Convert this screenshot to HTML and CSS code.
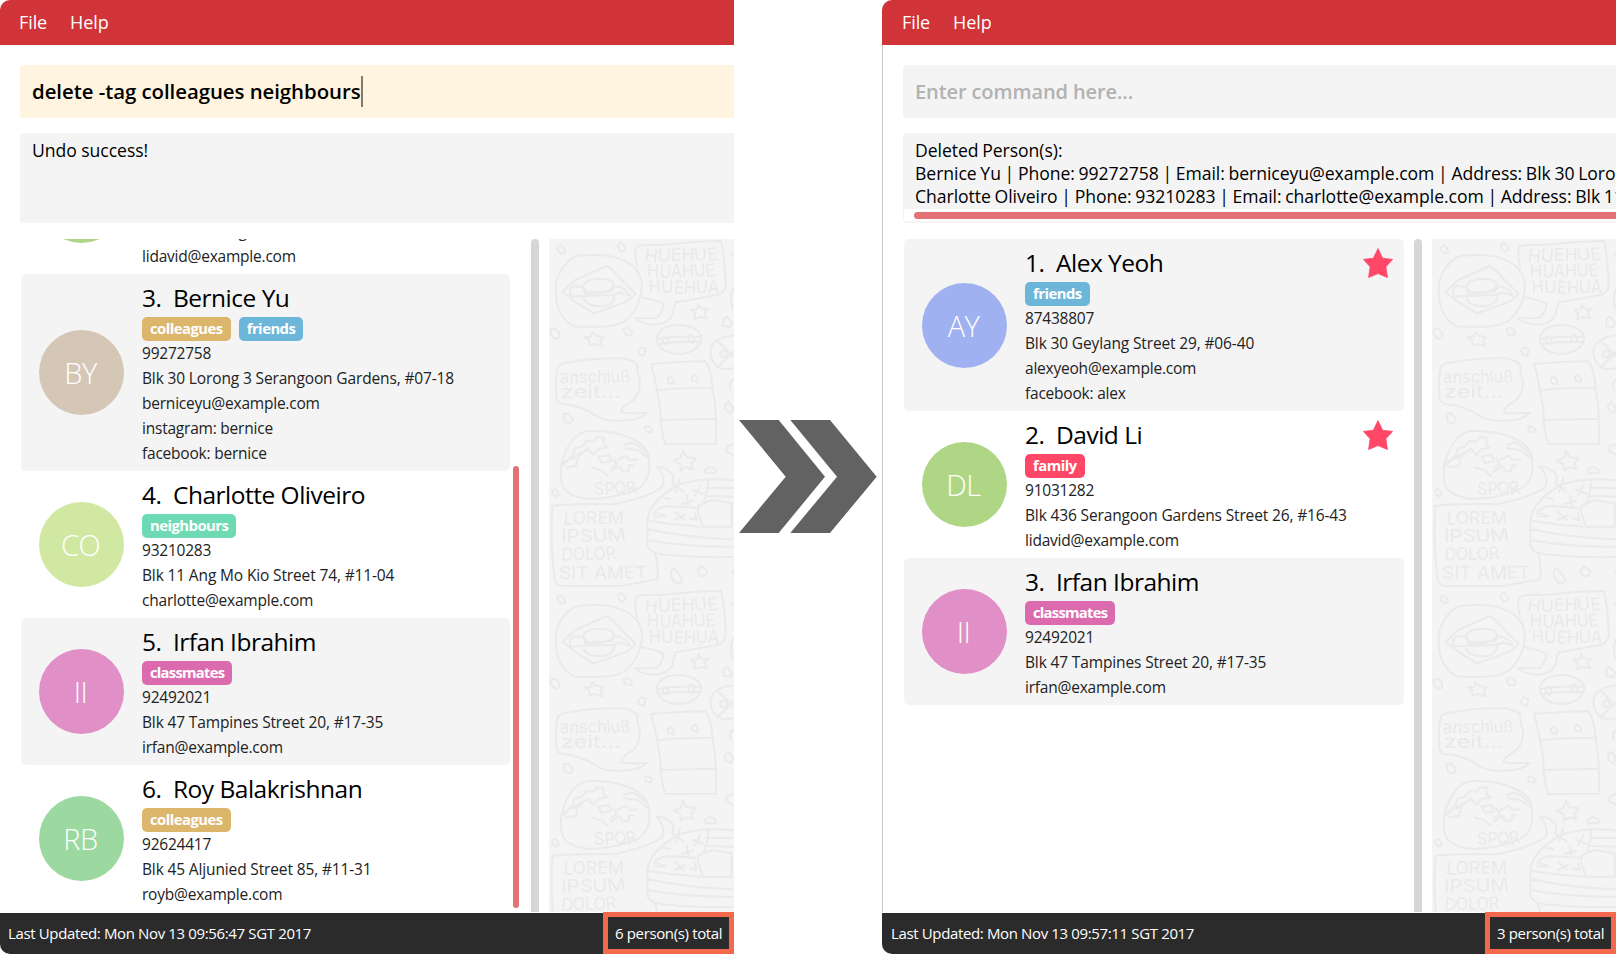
FILE: index.html
```html
<!DOCTYPE html>
<html lang="en"><head><meta charset="utf-8"><title>Contacts</title><link rel="stylesheet" href="styles.css"></head>
<body>
<svg class="defs" width="0" height="0" aria-hidden="true">
<defs>
<symbol id="star" viewBox="0 0 30 30"><path d="M15 .6 L19.6 10.2 L29.6 11.4 L22.9 18.8 L24.4 29.5 L15 25.6 L5.6 29.5 L7.1 18.8 L.4 11.4 L10.4 10.2Z" fill="#ff4767" stroke="#ff4767" stroke-width=".8" stroke-linejoin="round"/></symbol>
<pattern id="doodle" width="350" height="350" patternUnits="userSpaceOnUse">
<rect width="350" height="350" fill="#f4f4f4"/>
<g transform="scale(.33333) translate(-27 -27)" fill="none" stroke="#eaeaea" stroke-width="6" stroke-linejoin="round" stroke-linecap="round">
<path d="M100 82Q130 73 190 76Q240 80 276 106Q304 130 306 165Q305 225 260 270Q235 288 190 290H105Q70 275 55 235Q42 195 50 150Q65 105 100 82Z"/>
<path d="M68 185L105 150L200 108L215 118L245 150L287 192L260 215L162 251L100 212ZM130 170Q132 150 170 147Q215 145 220 160Q225 178 190 187Q140 200 130 170ZM92 200Q85 170 105 168L130 172L136 193L155 187L216 183L225 168Q258 172 270 197L240 188L216 195L105 199ZM130 205Q140 232 195 228Q222 220 223 198"/>
<path d="M292 112Q280 70 290 50Q310 42 360 45L470 35L543 33Q555 80 557 165Q555 190 530 195L470 206L408 217Q400 230 398 255Q380 285 340 284Q300 280 285 265L350 264Q372 240 370 220Q340 208 305 202"/>
<path d="M53 50L62 46L72 55L76 68L63 70L53 60ZM234 45L242 37L253 48L256 58L245 66L235 56ZM32 300L45 296L58 310L57 323L44 326L32 312ZM250 298L262 293L277 305L274 315L256 314ZM294 362L303 352L317 357L313 378L297 373Z"/>
<path d="M157 306L168 317L191 322L181 331L188 349L165 342L149 347L147 330L134 322L153 320ZM475 222L484 236L505 236L493 248L501 265L482 261L462 268L466 250L452 240L472 238Z"/>
<path d="M350 325Q357 285 420 285Q478 290 484 323Q480 365 420 372Q355 370 350 325ZM354 327Q400 318 481 320M358 342Q410 334 480 336M368 325L375 320L386 330L381 344L370 340ZM444 320L453 313L463 325L459 338L446 335Z"/>
<path d="M580 316Q520 322 511 360Q510 405 550 418L580 415M536 335L583 382M533 412L580 365M541 368L555 358L563 375L550 382L540 377ZM582 70L574 75M582 172Q568 190 576 235M550 268L560 260L577 278L570 291L550 288ZM582 450Q563 455 573 480M555 525L565 515L580 535L572 550L557 540ZM582 642L562 648L557 663L582 676M582 1018L578 1030"/>
<path d="M53 415Q55 400 90 397Q160 383 245 385Q280 390 292 405Q290 430 300 450Q302 490 280 510Q240 535 242 545Q255 553 322 548Q300 572 245 572Q190 575 165 555Q120 525 65 522Q45 515 49 490Q45 450 53 415Z"/>
<path d="M333 402Q420 395 497 394Q515 420 518 480Q530 530 528 641L375 642Q360 590 361 540Q350 460 333 402ZM352 483Q390 472 518 474M365 570L525 566M383 446L393 440L404 453L399 462L385 458ZM456 440L464 433L475 447L472 456L456 451Z"/>
<path d="M70 553L84 550L99 567L92 580L75 577ZM315 592L324 588L337 598L333 607L319 605ZM495 720Q508 704 527 719L526 728L496 730ZM37 780L48 777L57 793L48 799L38 793ZM392 1024L402 1014L426 1045L425 1055L410 1062L395 1045ZM473 1020L485 1008L502 1025L496 1038L478 1037Z"/>
<path d="M429 662L439 681L467 685L453 702L461 718L437 712L423 722L421 702L400 691L421 685Z"/>
<path d="M65 700Q90 610 145 603Q220 600 270 624Q325 645 327 690Q335 745 300 772Q245 802 150 807Q75 800 65 760Q60 725 65 700Z"/>
<path d="M70 705L96 680L105 655L125 650L140 633L162 635L170 622L191 623L190 642L202 652L176 657L160 675L145 657L130 665L112 685L88 683M80 712L107 708L112 692M65 700L130 665M175 680L206 675L214 693L186 699ZM252 645L275 637L292 645L325 673M252 655L293 660L325 685M220 685L231 704L214 713M212 725L238 708L247 724L265 723L268 705L281 707M232 690L256 677L270 690L292 688M155 712L187 722L204 738"/>
<path d="M37 828Q100 820 220 823Q335 800 369 768Q375 735 350 710Q375 707 400 735L400 760M37 828Q30 960 45 1050Q50 1069 70 1068L240 1068L352 1048Q356 1000 344 968"/>
<path d="M582 752Q500 740 420 762Q330 810 322 870V940Q320 975 400 975Q450 983 582 981M505 752Q502 790 490 820L475 828L474 845L488 890L575 890V820L515 810L490 820M500 773L580 774M500 798L582 800M342 852Q345 835 380 828L468 833M325 872Q400 885 480 890M322 896Q430 922 582 928M323 930Q450 953 582 950M395 758L430 785M408 787L420 745M460 780L490 792M465 795L481 766M425 822L460 812M440 796L445 825M370 803L390 807M345 860L375 858L350 850M405 845L432 870M435 855L405 870M450 865L470 870L465 850"/>
</g>
<g class="doodle-text" fill="#e9e9e9">
<text x="95" y="22" textLength="75" lengthAdjust="spacingAndGlyphs" rotate="8 4 0 0 -8 -8">HUEHUE</text>
<text x="98" y="38" textLength="69" lengthAdjust="spacingAndGlyphs" rotate="0 4 0 0 -6 -8">HUAHUE</text>
<text x="100" y="54" textLength="70" lengthAdjust="spacingAndGlyphs" rotate="-4 0 6 4 0 0">HUEHUA</text>
<text x="11" y="144" textLength="71" lengthAdjust="spacingAndGlyphs" rotate="0 5 0 0 0 -5 -5 -5 0">anschluß</text>
<text x="12" y="159" textLength="60" lengthAdjust="spacingAndGlyphs">zeit...</text>
<text x="45" y="256" textLength="44" lengthAdjust="spacingAndGlyphs" rotate="0 0 -8 -14">SPQR</text>
<text x="14" y="285" textLength="61" lengthAdjust="spacingAndGlyphs" rotate="6 0 0 0 0">LOREM</text>
<text x="12" y="303" textLength="66" lengthAdjust="spacingAndGlyphs" rotate="0 0 0 -5 -8">IPSUM</text>
<text x="12" y="321" textLength="56" lengthAdjust="spacingAndGlyphs" rotate="6 0 0 -4 -8">DOLOR</text>
<text x="10" y="340" textLength="89" lengthAdjust="spacingAndGlyphs" rotate="0 0 0 0 0 0 -5 -5">SIT AMET</text>
</g>
</pattern>
</defs></svg>
<main class="stage">
<section class="window window-left">
<nav class="menu"><span>File</span><span>Help</span></nav>
<div class="command active"><span class="typed">delete -tag colleagues neighbours</span><span class="caret"></span></div>
<div class="result"><p>Undo success!</p></div>
<div class="content">
<div class="list scrolled">
<article class="card"><div class="avatar green">DL</div><div class="info"><h2><b>2.</b>David Li</h2><div class="tags"><span class="tag family">family</span></div><p>91031282</p><p class="address">Blk 436 Serangoon Gardens Street 26, #16-43</p><p>lidavid@example.com</p></div></article>
<article class="card shade"><div class="avatar tan">BY</div><div class="info"><h2><b>3.</b>Bernice Yu</h2><div class="tags"><span class="tag colleagues">colleagues</span><span class="tag friends">friends</span></div><p>99272758</p><p class="address">Blk 30 Lorong 3 Serangoon Gardens, #07-18</p><p>berniceyu@example.com</p><p>instagram: bernice</p><p>facebook: bernice</p></div></article>
<article class="card"><div class="avatar lime">CO</div><div class="info"><h2><b>4.</b>Charlotte Oliveiro</h2><div class="tags"><span class="tag neighbours">neighbours</span></div><p>93210283</p><p class="address">Blk 11 Ang Mo Kio Street 74, #11-04</p><p>charlotte@example.com</p></div></article>
<article class="card shade"><div class="avatar pink">II</div><div class="info"><h2><b>5.</b>Irfan Ibrahim</h2><div class="tags"><span class="tag classmates">classmates</span></div><p>92492021</p><p class="address">Blk 47 Tampines Street 20, #17-35</p><p>irfan@example.com</p></div></article>
<article class="card"><div class="avatar mint">RB</div><div class="info"><h2><b>6.</b>Roy Balakrishnan</h2><div class="tags"><span class="tag colleagues">colleagues</span></div><p>92624417</p><p class="address">Blk 45 Aljunied Street 85, #11-31</p><p>royb@example.com</p></div></article>
</div>
<div class="track"><div class="thumb"></div></div>
<div class="divider"></div>
<svg class="wall"><rect width="100%" height="100%" fill="url(#doodle)"/></svg>
</div>
<footer class="status"><span>Last Updated: Mon Nov 13 09:56:47 SGT 2017</span><span class="total">6 person(s) total</span></footer>
</section>
<div class="between"><svg width="138" height="114" viewBox="0 0 138 114" fill="#626262"><path d="M0 0H39.7L86 56.7L39.7 113H0L46.7 56.7ZM51.3 0H91L137.7 56.7L91 113H51.3L98 56.7Z"/></svg></div>
<section class="window window-right">
<nav class="menu"><span>File</span><span>Help</span></nav>
<div class="command"><span class="typed">Enter command here...</span></div>
<div class="result deleted"><p>Deleted Person(s):</p><p>Bernice Yu | Phone: 99272758 | Email: berniceyu@example.com | Address: Blk 30 Lorong 3 Serangoon Gardens, #07-18</p><p>Charlotte Oliveiro | Phone: 93210283 | Email: charlotte@example.com | Address: Blk 11 Ang Mo Kio Street 74, #11-04</p><div class="hscroll"><div class="hthumb"></div></div></div>
<div class="content">
<div class="list">
<article class="card shade"><div class="avatar blue">AY</div><div class="info"><h2><b>1.</b>Alex Yeoh</h2><div class="tags"><span class="tag friends">friends</span></div><p>87438807</p><p class="address">Blk 30 Geylang Street 29, #06-40</p><p>alexyeoh@example.com</p><p>facebook: alex</p></div><svg class="star"><use href="#star"/></svg></article>
<article class="card"><div class="avatar green">DL</div><div class="info"><h2><b>2.</b>David Li</h2><div class="tags"><span class="tag family">family</span></div><p>91031282</p><p class="address">Blk 436 Serangoon Gardens Street 26, #16-43</p><p>lidavid@example.com</p></div><svg class="star"><use href="#star"/></svg></article>
<article class="card shade"><div class="avatar pink">II</div><div class="info"><h2><b>3.</b>Irfan Ibrahim</h2><div class="tags"><span class="tag classmates">classmates</span></div><p>92492021</p><p class="address">Blk 47 Tampines Street 20, #17-35</p><p>irfan@example.com</p></div></article>
</div>
<div class="track"></div>
<div class="divider"></div>
<svg class="wall"><rect width="100%" height="100%" fill="url(#doodle)"/></svg>
</div>
<footer class="status"><span>Last Updated: Mon Nov 13 09:57:11 SGT 2017</span><span class="total">3 person(s) total</span></footer>
</section>
</main>
</body></html>
```
FILE: styles.css
```css
* { box-sizing: border-box; }
body { margin: 0; background: #fff; font-family: "Open Sans", "Noto Sans", sans-serif; color: #222; overflow: hidden; }
p, h2 { margin: 0; white-space: nowrap; }
.defs { display: block; height: 0; }
.stage { display: flex; width: 1616px; height: 954px; }
.window { display: flex; flex-direction: column; height: 954px; overflow: hidden; border-radius: 10px 0 0 10px; background: #fff; flex: none; }
.window-left { width: 734px; }
.window-right { width: 734px; background: linear-gradient(90deg, #c8c8c8 1px, #fff 1px); }
.between { width: 148px; flex: none; padding: 420px 0 0 5px; }
.between svg { display: block; }
.menu { height: 45px; flex: none; background: #d13438; color: #fff; display: flex; gap: 23px; padding: 0 19px; font-size: 18px; line-height: 45px; letter-spacing: -.1px; }
.window-right .menu { padding-left: 20px; }
.command { height: 53px; flex: none; margin: 20px 0 0 20px; padding-left: 12px; border-radius: 4px 0 0 4px; background: #f4f4f4; color: #b2b2b2; display: flex; align-items: center; font-size: 20px; font-weight: 600; letter-spacing: -.1px; white-space: nowrap; }
.command.active { background: #fff4df; color: #000; font-size: 20.4px; letter-spacing: -.05px; }
.active .typed { padding-bottom: 2px; }
.caret { width: 2px; height: 31px; background: #807a6f; }
.result { height: 90px; flex: none; margin: 15px 0 0 20px; padding: 6px 0 0 12px; border-radius: 4px 0 0 4px; background: #f4f4f4; overflow: hidden; color: #000; font-size: 17.6px; line-height: 23px; letter-spacing: -.05px; }
.deleted { word-spacing: -.8px; }
.window-right .command, .window-right .result { margin-left: 21px; }
.hscroll { height: 12px; margin: 1px 0 0 -11px; background: #fff; padding: 3px 0 0 10px; }
.hthumb { height: 7px; border-radius: 4px 0 0 4px; background: #e27276; }
.content { display: flex; height: 673px; flex: none; margin-top: 16px; }
.list { width: 490px; margin-left: 20px; overflow: hidden; display: flex; flex-direction: column; flex: none; }
.window-right .list { width: 501px; margin-left: 21px; }
.scrolled { justify-content: flex-end; }
.card { position: relative; display: flex; align-items: center; flex: none; margin-left: 1px; padding: 8px 0 5px 18px; gap: 18px; border-radius: 5px; }
.shade { background: #f4f4f4; }
.avatar { width: 85px; height: 85px; margin-top: -3px; border-radius: 50%; color: #fff; display: grid; place-items: center; padding-right: 2px; font-size: 29px; font-weight: 300; line-height: 1; letter-spacing: -.5px; flex: none; }
.info { display: flex; flex-direction: column; }
.info h2 { height: 35px; font-size: 24.5px; font-weight: 400; line-height: 31px; color: #000; letter-spacing: -.5px; }
.info b { display: inline-block; width: 31px; font-weight: 400; }
.tags { display: flex; gap: 8px; height: 24px; }
.tag { height: 24px; padding: 0 8px; border-radius: 5px; color: #fff; font-size: 14.8px; font-weight: 700; line-height: 23px; letter-spacing: -.5px; }
.tag.classmates { letter-spacing: -.75px; }
.info p { height: 25px; font-size: 15.5px; line-height: 25px; letter-spacing: -.22px; }
.info .address { letter-spacing: -.14px; }
.star { position: absolute; top: 9px; right: 11px; width: 30px; height: 30px; }
.tan { background: #d5c7b6; } .lime { background: #d1e8a2; } .pink { background: #e08fc7; }
.mint { background: #9bd9a0; } .green { background: #afd685; } .blue { background: #9fb1f1; }
.colleagues { background: #dcb66b; } .friends { background: #6cb6da; } .neighbours { background: #6ddab4; }
.classmates { background: #db6bae; } .family { background: #ff4767; }
.track { width: 21px; flex: none; padding: 227px 0 0 3px; }
.window-right .track { width: 10px; padding: 0; }
.thumb { width: 6px; height: 442px; border-radius: 3px; background: #e27276; }
.divider { width: 8px; border-radius: 4px 4px 0 0; background: #d6d6d6; flex: none; }
.wall { display: block; width: 185px; height: 673px; margin-left: 10px; flex: none; }
.doodle-text { font-family: Inter, sans-serif; font-size: 17.5px; font-weight: 400; }
.status { height: 42px; margin-top: auto; flex: none; border-top: 1px solid #fff; background: #2b2b2b; color: #fff; display: flex; justify-content: space-between; padding-left: 8px; font-size: 15px; line-height: 41px; letter-spacing: -.36px; }
.window-right .status { padding-left: 9px; }
.total { width: 131px; height: 42px; margin-top: -1px; border: 5px solid #f4694d; padding-left: 7px; line-height: 33px; white-space: nowrap; }
```
